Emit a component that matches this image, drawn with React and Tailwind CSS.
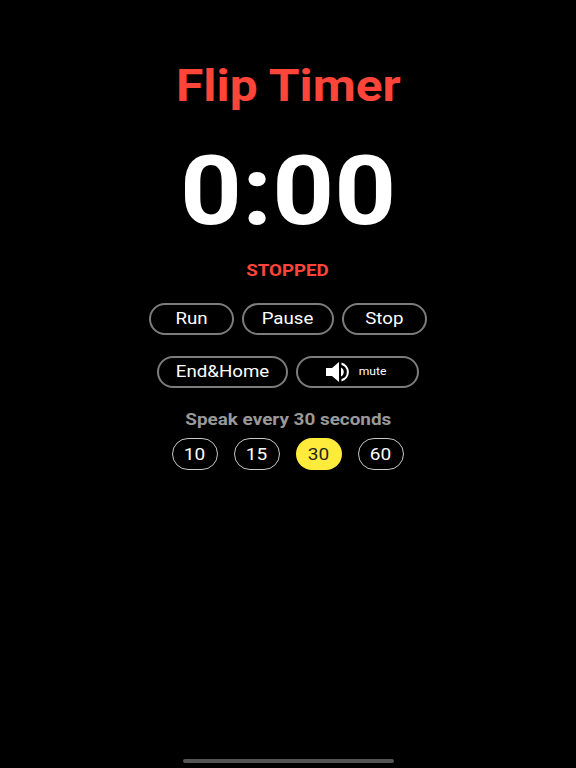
import React from "react";

const Btn = ({ w, children }) => (
  <div className={`${w} h-8 rounded-full border-2 border-[#7c7c7c] flex items-center justify-center text-white text-[17px]`}>
    {children}
  </div>
);

const Chip = ({ on, children }) => (
  <div
    className={
      on
        ? "w-[46px] h-8 pt-px rounded-full bg-[#ffeb3b] text-[#222] flex items-center justify-center text-[17px]"
        : "w-[46px] h-8 pt-px rounded-full border border-[#c7c7cc] text-white flex items-center justify-center text-[17px]"
    }
  >
    <span className="scale-x-[1.12]">{children}</span>
  </div>
);

export default function App() {
  return (
    <div className="relative w-[576px] h-[768px] bg-black overflow-hidden flex flex-col items-center font-['Roboto',sans-serif]">
      <div className="mt-[60px] h-[52px] leading-[52px] text-[44px] font-bold text-[#ff453a] scale-x-[1.13]">Flip Timer</div>
      <div className="mt-[23px] h-[112px] leading-[112px] text-[96px] font-bold text-white scale-x-[1.125]">0:00</div>
      <div className="mt-[13px] h-5 leading-5 text-[17px] font-bold text-[#ff453a] scale-x-[1.1]">STOPPED</div>
      <div className="mt-[23px] flex gap-2">
        <Btn w="w-[85px]"><span className="scale-x-[1.1]">Run</span></Btn>
        <Btn w="w-[92px]"><span className="scale-x-[1.1]">Pause</span></Btn>
        <Btn w="w-[85px]"><span className="scale-x-[1.1]">Stop</span></Btn>
      </div>
      <div className="mt-[21px] flex gap-2">
        <Btn w="w-[131px]"><span className="scale-x-[1.1]">End&amp;Home</span></Btn>
        <Btn w="w-[123px]">
          <svg width="26" height="22" viewBox="0 0 26 22" className="mr-[9px] ml-[-5px]">
            <path d="M1 7h6l7-6v20l-7-6H1z" fill="#fff" />
            <path d="M16 6.5a5 5 0 0 1 0 9z" fill="#fff" />
            <path d="M16.5 1.5a9.8 9.8 0 0 1 0 19v-2.4a7.4 7.4 0 0 0 0-14.2z" fill="#fff" />
          </svg>
          <span className="text-[11px] scale-x-[1.1]">mute</span>
        </Btn>
      </div>
      <div className="mt-[22px] h-5 leading-5 text-[16px] font-bold text-[#999999] scale-x-[1.18]">Speak every 30 seconds</div>
      <div className="mt-2 flex gap-4">
        <Chip>10</Chip>
        <Chip>15</Chip>
        <Chip on>30</Chip>
        <Chip>60</Chip>
      </div>
      <div className="absolute left-[183px] bottom-[5px] w-[211px] h-1 rounded-full bg-[#555]" />
    </div>
  );
}
